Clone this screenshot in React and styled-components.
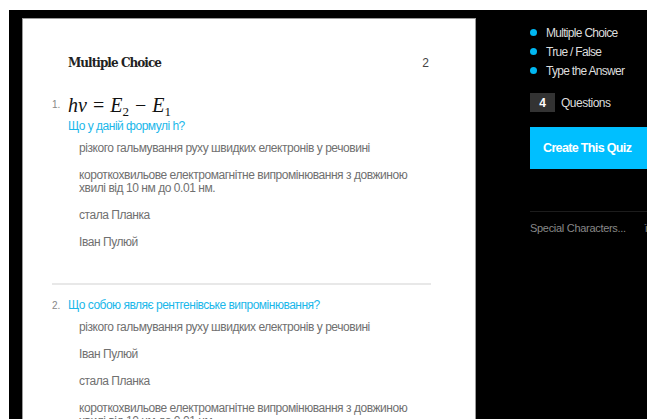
import React from "react";
import styled, { createGlobalStyle } from "styled-components";

const GlobalStyle = createGlobalStyle`
  html, body {
    margin: 0;
    background: #fff;
  }
  body {
    padding: 10px 0 0 9px;
    overflow: hidden;
    font-family: "Liberation Sans", Arial, sans-serif;
  }
`;

const Stage = styled.div`
  display: flex;
  align-items: flex-start;
  background: #000;
  padding: 8px 0 0 13px;
  height: 420px;
`;

const Sheet = styled.div`
  width: 454px;
  flex-shrink: 0;
  background: #fff;
  border: 1px solid #9a9a9a;
  border-bottom: none;
  height: 420px;
  padding: 37px 0 0;
  box-sizing: border-box;
  overflow: hidden;
`;

const SheetHeader = styled.div`
  display: flex;
  justify-content: space-between;
  padding: 0 46px 0 45px;
  margin-bottom: 24px;
`;

const SectionTitle = styled.h2`
  margin: 0;
  font-family: "DejaVu Serif", serif;
  font-weight: bold;
  font-size: 12px;
  letter-spacing: -0.95px;
  color: #222;
`;

const Count = styled.span`
  font-size: 12px;
  color: #444;
`;

const QuestionList = styled.ol`
  list-style: none;
  margin: 0;
  padding: 0 44px 0 29px;
`;

const Question = styled.li`
  display: flex;
  padding-bottom: ${(p) => (p.$last ? "0" : "20px")};
  margin-bottom: ${(p) => (p.$last ? "0" : "13px")};
  border-bottom: ${(p) => (p.$last ? "none" : "2px solid #e8e8e8")};
`;

const Number = styled.span`
  width: 16px;
  flex-shrink: 0;
  font-size: 10px;
  color: #888;
  padding-top: ${(p) => (p.$formula ? "5px" : "2px")};
`;

const Body = styled.div`
  flex: 1;
`;

const Formula = styled.div`
  font-family: "Liberation Serif", "DejaVu Serif", serif;
  font-size: 20px;
  color: #111;
  line-height: 22px;
  margin-bottom: 3px;
  & i {
    font-style: italic;
  }
  & sub {
    font-size: 13px;
    vertical-align: -4px;
    line-height: 0;
  }
`;

const Op = styled.span`
  margin: 0 6px;
`;

const Prompt = styled.div`
  font-size: 12px;
  letter-spacing: -0.5px;
  color: #1ab7ea;
  line-height: 15px;
  margin-bottom: 8px;
`;

const Answer = styled.div`
  font-size: 12px;
  letter-spacing: -0.45px;
  color: #707070;
  line-height: 13px;
  margin: 0 0 14px 11px;
  max-width: 330px;
`;

const Sidebar = styled.aside`
  flex: 1;
  padding: 5px 0 0 54px;
  color: #ddd;
  overflow: hidden;
  white-space: nowrap;
`;

const TypeList = styled.ul`
  list-style: none;
  margin: 0;
  padding: 0;
`;

const TypeItem = styled.li`
  display: flex;
  align-items: center;
  gap: 9px;
  font-size: 12px;
  letter-spacing: -0.7px;
  height: 19px;
`;

const Dot = styled.span`
  width: 7px;
  height: 7px;
  border-radius: 50%;
  background: #00b7f1;
`;

const QuestionCount = styled.div`
  display: flex;
  align-items: center;
  gap: 6px;
  margin-top: 13px;
  font-size: 12px;
  letter-spacing: -0.5px;
`;

const CountBox = styled.span`
  width: 25px;
  height: 19px;
  background: #333;
  color: #fff;
  font-weight: bold;
  letter-spacing: 0;
  display: flex;
  align-items: center;
  justify-content: center;
`;

const CreateButton = styled.button`
  display: block;
  width: 140px;
  height: 42px;
  margin-top: 15px;
  border: none;
  background: #00bfff;
  color: #fff;
  text-align: left;
  padding: 0 0 0 13px;
  font-family: "Liberation Sans", sans-serif;
  font-weight: bold;
  font-size: 12.5px;
  letter-spacing: -0.65px;
`;

const Divider = styled.hr`
  border: none;
  border-top: 1px solid #1c1c1c;
  margin: 42px 0 0;
`;

const SpecialRow = styled.div`
  display: flex;
  gap: 19px;
  margin-top: 10px;
  font-size: 11px;
  letter-spacing: -0.3px;
  color: #888;
`;

const questions = [
  {
    formula: true,
    prompt: "Що у даній формулі h?",
    answers: [
      "різкого гальмування руху швидких електронів у речовині",
      "короткохвильове електромагнітне випромінювання з довжиною хвилі від 10 нм до 0.01 нм.",
      "стала Планка",
      "Іван Пулюй",
    ],
  },
  {
    prompt: "Що собою являє рентгенівське випромінювання?",
    answers: [
      "різкого гальмування руху швидких електронів у речовині",
      "Іван Пулюй",
      "стала Планка",
      "короткохвильове електромагнітне випромінювання з довжиною хвилі від 10 нм до 0.01 нм.",
    ],
  },
];

export default function App() {
  return (
    <>
      <GlobalStyle />
      <Stage>
        <Sheet>
          <SheetHeader>
            <SectionTitle>Multiple Choice</SectionTitle>
            <Count>2</Count>
          </SheetHeader>
          <QuestionList>
            {questions.map((q, i) => (
              <Question key={i} $last={i === questions.length - 1}>
                <Number $formula={q.formula}>{i + 1}.</Number>
                <Body>
                  {q.formula && (
                    <Formula>
                      <i>hν</i>
                      <Op>=</Op>
                      <i>E</i>
                      <sub>2</sub>
                      <Op>−</Op>
                      <i>E</i>
                      <sub>1</sub>
                    </Formula>
                  )}
                  <Prompt>{q.prompt}</Prompt>
                  {q.answers.map((a, j) => (
                    <Answer key={j}>{a}</Answer>
                  ))}
                </Body>
              </Question>
            ))}
          </QuestionList>
        </Sheet>
        <Sidebar>
          <TypeList>
            <TypeItem><Dot />Multiple Choice</TypeItem>
            <TypeItem><Dot />True / False</TypeItem>
            <TypeItem><Dot />Type the Answer</TypeItem>
          </TypeList>
          <QuestionCount>
            <CountBox>4</CountBox>
            Questions
          </QuestionCount>
          <CreateButton>Create This Quiz</CreateButton>
          <Divider />
          <SpecialRow>
            <span>Special Characters...</span>
            <span>ï</span>
          </SpecialRow>
        </Sidebar>
      </Stage>
    </>
  );
}
